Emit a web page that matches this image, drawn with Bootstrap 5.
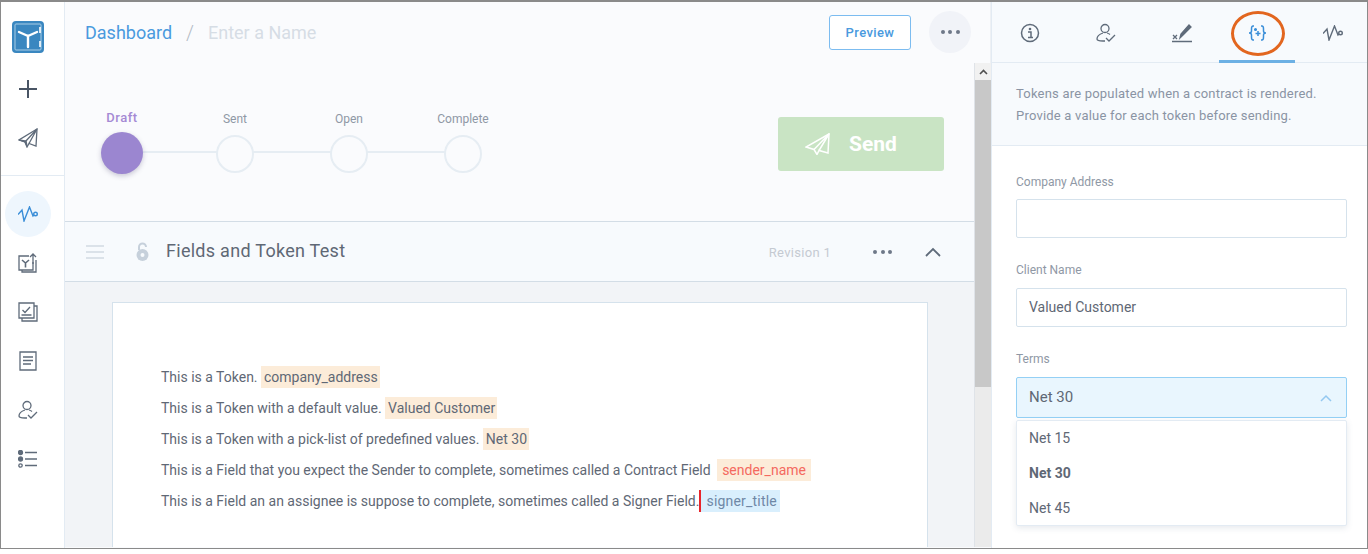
<!DOCTYPE html>
<html lang="en">
<head>
  <meta charset="UTF-8" />
  <meta name="viewport" content="width=device-width, initial-scale=1.0"/>
  <title>Dashboard</title>
  <link href="https://cdn.jsdelivr.net/npm/bootstrap@5.3.3/dist/css/bootstrap.min.css" rel="stylesheet"/>
  <style>
    body { background: #fff; font-family: Roboto, "Liberation Sans", sans-serif; color: #5f6875; overflow: hidden; }
    .app-frame { width: 1368px; height: 549px; border: 1px solid #8a8a8a; border-top-width: 2px; overflow: hidden; position: relative; }
    .side-rail { width: 64px; flex: none; border-right: 1px solid #e3ebf3; background: #fff; }
    .rail-top { height: 174px; padding: 19px 9px 0 0; border-bottom: 1px solid #e3ebf3; }
    .rail-plus { margin-top: 26px; }
    .rail-plane { margin-top: 29px; }
    .rail-btn { width: 46px; height: 46px; border-radius: 50%; }
    .rail-btn.is-active { background: #eef6fd; }
    .rail-low { padding: 15px 9px 0 0; gap: 3px; }
    .main-pane { width: 926px; flex: none; background: #fafbfd; }
    .top-head { height: 61px; padding: 0 19px 0 20px; border-right: 1px solid #eef1f5; }
    .crumb { font-size: 18px; color: #4a9ade; }
    .crumb-sep { font-size: 20px; color: #b4bcc6; margin: 0 14px; font-weight: 300; }
    .crumb-name { font-size: 18px; color: #d6dde5; }
    .preview-btn { width: 82px; height: 35px; border: 1px solid #7cbcf0; border-radius: 3px; background: #fff; color: #4a9ade; font-size: 13px; font-weight: 500; letter-spacing: .4px; padding: 0; }
    .more-btn { width: 42px; height: 42px; border-radius: 50%; background: #f1f3f8; margin: -2px 0 0 18px; }
    .dot-row { display: flex; gap: 3.5px; }
    .dot-row i { width: 4px; height: 4px; border-radius: 50%; background: #6e7888; display: block; }
    .work-col { width: 909px; flex: none; height: 484px; overflow: hidden; }
    .stage-band { height: 158px; padding: 0 30px 0 0; }
    .steps { position: relative; width: 456px; height: 100px; }
    .step-item { width: 114px; }
    .step-line + .step-item { margin-right: -1px; }
    .step-lbl { font-size: 12px; color: #8f98a5; line-height: 14px; height: 14px; margin-top: 20px; }
    .step-lbl.on { color: #a58ad4; font-size: 13px; letter-spacing: .5px; font-weight: 500; margin-top: 19px; }
    .step-dot { width: 38px; height: 38px; border: 2px solid #e6edf3; border-radius: 50%; background: #fafbfd; margin-top: 9px; position: relative; z-index: 1; }
    .step-dot.on { width: 42px; height: 42px; border: 0; background: #9b86d0; box-shadow: 0 2px 5px rgba(60,50,100,.25); margin-top: 7px; }
    .step-line { position: absolute; left: 57px; top: 59px; width: 342px; height: 2px; background: #e6edf3; }
    .send-btn { width: 166px; height: 54px; margin-top: 4px; background: #c9e4c4; border: 0; border-radius: 3px; color: #fff; font-size: 21px; font-weight: 700; gap: 19px; padding: 0 0 0 27px; }
    .send-btn span { margin-top: 1px; }
    .sect-head { height: 61px; background: #f7fafd; border-top: 1px solid #d3dde6; border-bottom: 1px solid #d3dde6; padding: 0 33px 0 21px; }
    .burger { width: 18px; margin-right: 32px; gap: 4px; }
    .burger i { display: block; height: 2px; background: #dbe2e9; }
    .sect-title { font-size: 18px; letter-spacing: .28px; color: #5f6875; margin: 0 0 2px 17px; }
    .rev-txt { font-size: 13px; letter-spacing: .3px; color: #c5cad2; margin: 2px 42px 0 0; }
    .sect-chev { margin-left: 33px; }
    .doc-area { background: #f2f4f7; padding: 20px 46px 0 47px; height: 300px; }
    .doc-sheet { background: #fff; border: 1px solid #d5e2ec; border-bottom: 0; height: 280px; padding: 59px 48px 0 48px; font-size: 14px; }
    .doc-line { height: 31px; line-height: 31px; white-space: nowrap; }
    .tok { background: #fcecd9; padding: 3px 2px 3px 3px; }
    .tok-red { color: #f4695f; padding: 3px 5px; margin-left: 3px; }
    .tok-blue { background: #d9effd; color: #6f88a6; padding: 3px 3px 3px 5px; letter-spacing: .2px; border-left: 2px solid #e8252b; }
    .scroll-col { width: 17px; flex: none; background: #ebebeb; border-left: 1px solid #dfe3e8; }
    .scroll-up { height: 17px; background: #f1f1f1; }
    .scroll-thumb { height: 307px; background: #c8c8c8; }
    .right-pane { width: 376px; flex: none; border-left: 1px solid #e3ebf3; }
    .tab-strip { height: 61px; background: #f7fafd; border-bottom: 1px solid #e3ebf3; }
    .tab-cell { width: 76px; flex: none; height: 61px; margin-bottom: -1px; padding-top: 1px; }
    .tab-cell.is-narrow { width: 75px; }
    .tab-cell.is-on { border-bottom: 3px solid #6cb0e4; padding-top: 4px; }
    .note-box { height: 83px; padding: 20px 24px 0 24px; background: #f7fafd; border-bottom: 1px solid #e3ebf3; font-size: 13px; letter-spacing: .2px; line-height: 22px; color: #8a94a4; }
    .form-wrap { padding: 29px 20px 0 24px; }
    .fld-lbl { font-size: 12px; color: #8f98a5; line-height: 14px; margin-bottom: 10px; }
    .fld-inp { height: 39px; border: 1px solid #d5e2ec; border-radius: 2px; padding: 0 12px; font-size: 14px; color: #5f6875; margin-bottom: 25px; background: #fff; line-height: 37px; }
    .fld-inp + .fld-lbl { margin-bottom: 11px; }
    .drop-head { height: 41px; background: #e9f6fe; border: 1px solid #94d0f5; border-radius: 2px; padding: 0 14px 0 12px; font-size: 15px; color: #5f6875; }
    .drop-menu { margin-top: 2px; height: 106px; border: 1px solid #e3ebf3; border-radius: 2px; box-shadow: 0 2px 6px rgba(80,100,130,.14); background: #fff; padding: 0 12px; font-size: 14px; }
    .drop-menu div { height: 35px; line-height: 35px; }
    .annot-ring { position: absolute; left: 1230px; top: 9px; width: 54px; height: 45px; border: 3px solid #e2661f; border-radius: 50%; pointer-events: none; }
  </style>
</head>
<body>

<div class="app-frame d-flex">

  <!-- Left rail -->
  <div class="side-rail d-flex flex-column">
    <div class="rail-top d-flex flex-column align-items-center">
      <svg width="32" height="32" viewBox="0 0 32 32">
        <rect width="32" height="32" rx="4" fill="#3a87c0"/>
        <rect x="3" y="3" width="26" height="26" rx="1" fill="none" stroke="#a8cde6" stroke-width="1"/>
        <path d="M16 15 L7 11 M16 15 L25 11 M16 15 V26" stroke="#fff" stroke-width="2.4" stroke-linecap="round" fill="none"/>
        <path d="M28 6v6M28 20v6" stroke="#fff" stroke-width="1.6"/>
      </svg>
      <svg class="rail-plus" width="20" height="20" viewBox="0 0 20 20"><path d="M10 1v18M1 10h18" stroke="#4a5565" stroke-width="2" fill="none"/></svg>
      <svg class="rail-plane" width="20" height="20" viewBox="0 0 20 20" fill="none" stroke="#5f6b7a" stroke-width="1.3"><path d="M19 1 1 12l6 2 2 5 2-3.5 7 2.5z"/><path d="M19 1 7 14M19 1 11 15.5"/><path d="M1 12l7 1 1 5-2-4z" fill="#5f6b7a"/></svg>
    </div>
    <div class="rail-low d-flex flex-column align-items-center">
      <div class="rail-btn is-active d-flex align-items-center justify-content-center">
        <svg width="20" height="16" viewBox="0 0 20 16" fill="none" stroke="#3a8ed8" stroke-width="1.4"><path d="M0 8.5 4 4l2 11L11.5 1 15 10l1-1"/><circle cx="17.5" cy="8" r="1.8"/></svg>
      </div>
      <div class="rail-btn d-flex align-items-center justify-content-center">
        <svg width="20" height="20" viewBox="0 0 20 20" fill="none" stroke="#5f6b7a" stroke-width="1.3"><path d="M11 3H1v14h14V9"/><path d="M4 17v2h14V7"/><path d="M15 11V1M12 4l3-3 3 3"/><path d="M4 7l3.5 3L11 7M7.5 10v4.5" stroke-width="1.6"/></svg>
      </div>
      <div class="rail-btn d-flex align-items-center justify-content-center">
        <svg width="20" height="20" viewBox="0 0 20 20" fill="none" stroke="#5f6b7a" stroke-width="1.3"><path d="M1 1h15v15H1z"/><path d="M16 4h3v15H4v-3"/><path d="M4.5 8 7 10.5 12 5M3.5 13h10"/></svg>
      </div>
      <div class="rail-btn d-flex align-items-center justify-content-center">
        <svg width="18" height="20" viewBox="0 0 18 20" fill="none" stroke="#5f6b7a" stroke-width="1.3"><path d="M1 1h16v18H1z"/><path d="M4 6h10M4 9.5h10M4 13h8"/></svg>
      </div>
      <div class="rail-btn d-flex align-items-center justify-content-center">
        <svg width="20" height="20" viewBox="0 0 20 20" fill="none" stroke="#5f6b7a" stroke-width="1.3"><circle cx="9" cy="5.5" r="4"/><path d="M7 10c-3 1-6 3-6 6 0 2 3 2 6 2h2"/><path d="M11 10c1 .3 2 .7 3 1.5"/><path d="M10 15l3 3 6-6"/></svg>
      </div>
      <div class="rail-btn d-flex align-items-center justify-content-center">
        <svg width="20" height="18" viewBox="0 0 20 18" fill="none" stroke="#5f6b7a" stroke-width="1.3"><circle cx="2.5" cy="2.5" r="2" fill="#5f6b7a"/><circle cx="2.5" cy="9" r="2" fill="#5f6b7a"/><circle cx="2.5" cy="15.5" r="1.7"/><path d="M7 2.5h12M7 9h12M7 15.5h12"/></svg>
      </div>
    </div>
  </div>

  <!-- Main -->
  <div class="main-pane d-flex flex-column">
    <div class="top-head d-flex align-items-center">
      <span class="crumb">Dashboard</span>
      <span class="crumb-sep">/</span>
      <span class="crumb-name">Enter a Name</span>
      <button class="preview-btn ms-auto" type="button">Preview</button>
      <div class="more-btn d-flex align-items-center justify-content-center"><div class="dot-row"><i></i><i></i><i></i></div></div>
    </div>
    <div class="d-flex">
      <div class="work-col">
        <div class="stage-band d-flex align-items-center justify-content-between">
          <div class="steps d-flex">
            <div class="step-line"></div>
            <div class="step-item d-flex flex-column align-items-center"><div class="step-lbl on">Draft</div><div class="step-dot on"></div></div>
            <div class="step-item d-flex flex-column align-items-center"><div class="step-lbl">Sent</div><div class="step-dot"></div></div>
            <div class="step-item d-flex flex-column align-items-center"><div class="step-lbl">Open</div><div class="step-dot"></div></div>
            <div class="step-item d-flex flex-column align-items-center"><div class="step-lbl">Complete</div><div class="step-dot"></div></div>
          </div>
          <button class="send-btn d-flex align-items-center" type="button">
            <svg width="25" height="22" viewBox="0 0 25 22" fill="none" stroke="#fff" stroke-width="1.5"><path d="M24 1 1 14l8 2.5 3 5 2-4 9 2.5z"/><path d="M24 1 9 16.5M24 1 14 17.5"/></svg>
            <span>Send</span>
          </button>
        </div>
        <div class="sect-head d-flex align-items-center">
          <div class="burger d-flex flex-column"><i></i><i></i><i></i></div>
          <svg width="13" height="20" viewBox="0 0 13 20"><path d="M3 8V5a3.5 3.5 0 0 1 7 0" fill="none" stroke="#c6d0db" stroke-width="2"/><circle cx="6.5" cy="13" r="6" fill="#c6d0db"/><circle cx="6.5" cy="13" r="2" fill="#f7fafd"/></svg>
          <span class="sect-title">Fields and Token Test</span>
          <span class="rev-txt ms-auto">Revision 1</span>
          <div class="dot-row"><i></i><i></i><i></i></div>
          <svg class="sect-chev" width="16" height="10" viewBox="0 0 16 10"><path d="M1 9l7-7 7 7" fill="none" stroke="#5f6b7a" stroke-width="1.8"/></svg>
        </div>
        <div class="doc-area">
          <div class="doc-sheet">
            <div class="doc-line">This is a Token. <span class="tok">company_address</span></div>
            <div class="doc-line">This is a Token with a default value. <span class="tok">Valued Customer</span></div>
            <div class="doc-line">This is a Token with a pick-list of predefined values. <span class="tok">Net 30</span></div>
            <div class="doc-line">This is a Field that you expect the Sender to complete, sometimes called a Contract Field <span class="tok tok-red">sender_name</span></div>
            <div class="doc-line">This is a Field an an assignee is suppose to complete, sometimes called a Signer Field.<span class="tok tok-blue">signer_title</span></div>
          </div>
        </div>
      </div>
      <div class="scroll-col">
        <div class="scroll-up d-flex align-items-center justify-content-center"><svg width="9" height="6" viewBox="0 0 9 6"><path d="M1 5l3.5-3.5L8 5" fill="none" stroke="#505050" stroke-width="1.6"/></svg></div>
        <div class="scroll-thumb"></div>
      </div>
    </div>
  </div>

  <!-- Right panel -->
  <div class="right-pane d-flex flex-column">
    <div class="tab-strip d-flex">
      <div class="tab-cell d-flex align-items-center justify-content-center">
        <svg width="20" height="20" viewBox="0 0 20 20"><circle cx="10" cy="10" r="8.5" fill="none" stroke="#5f6b7a" stroke-width="1.5"/><circle cx="10" cy="6" r="1.3" fill="#5f6b7a"/><path d="M8 9h3v5M8 14.5h5" fill="none" stroke="#5f6b7a" stroke-width="1.5"/></svg>
      </div>
      <div class="tab-cell d-flex align-items-center justify-content-center">
        <svg width="20" height="20" viewBox="0 0 20 20" fill="none" stroke="#5f6b7a" stroke-width="1.3"><circle cx="9" cy="5.5" r="4"/><path d="M7 10c-3 1-6 3-6 6 0 2 3 2 6 2h2"/><path d="M11 10c1 .3 2 .7 3 1.5"/><path d="M10 15l3 3 6-6"/></svg>
      </div>
      <div class="tab-cell is-narrow d-flex align-items-center justify-content-center">
        <svg width="20" height="20" viewBox="0 0 20 20" fill="none" stroke="#5f6b7a" stroke-width="1.3"><path d="M0 18.5h20" stroke-width="1.5"/><path d="M1 12l4 4M5 12l-4 4"/><path d="M8 15l1-4 8-9 2 2-8 8z" fill="#5f6b7a"/></svg>
      </div>
      <div class="tab-cell is-on d-flex align-items-center justify-content-center">
        <svg width="19" height="16" viewBox="0 0 19 16" fill="none" stroke="#3a8ed8" stroke-width="1.5"><path d="M6 1H5C3.5 1 3.5 2 3.5 4V6C3.5 7 2.5 8 1 8 2.5 8 3.5 9 3.5 10V12C3.5 14 3.5 15 5 15H6"/><path d="M13 1h1c1.5 0 1.5 1 1.5 3V6c0 1 1 2 2.5 2-1.5 0-2.5 1-2.5 2v2c0 2 0 3-1.5 3h-1"/><path d="M10 6v5M7.5 8.5h5"/><circle cx="7.5" cy="4.5" r=".8" fill="#3a8ed8"/></svg>
      </div>
      <div class="tab-cell d-flex align-items-center justify-content-center">
        <svg width="20" height="16" viewBox="0 0 20 16" fill="none" stroke="#5f6b7a" stroke-width="1.4"><path d="M0 8.5 4 4l2 11L11.5 1 15 10l1-1"/><circle cx="17.5" cy="8" r="1.8"/></svg>
      </div>
    </div>
    <div class="note-box">Tokens are populated when a contract is rendered.<br>Provide a value for each token before sending.</div>
    <div class="form-wrap">
      <div class="fld-lbl">Company Address</div>
      <div class="fld-inp"></div>
      <div class="fld-lbl">Client Name</div>
      <div class="fld-inp">Valued Customer</div>
      <div class="fld-lbl">Terms</div>
      <div class="drop-head d-flex align-items-center justify-content-between">
        <span>Net 30</span>
        <svg width="12" height="8" viewBox="0 0 12 8"><path d="M1 7l5-5 5 5" fill="none" stroke="#94c8f0" stroke-width="1.5"/></svg>
      </div>
      <div class="drop-menu">
        <div>Net 15</div>
        <div class="fw-bold">Net 30</div>
        <div>Net 45</div>
      </div>
    </div>
  </div>

  <!-- hand-drawn highlight round the tokens tab -->
  <div class="annot-ring"></div>
</div>

<script src="https://cdn.jsdelivr.net/npm/bootstrap@5.3.3/dist/js/bootstrap.bundle.min.js"></script>
</body>
</html>
